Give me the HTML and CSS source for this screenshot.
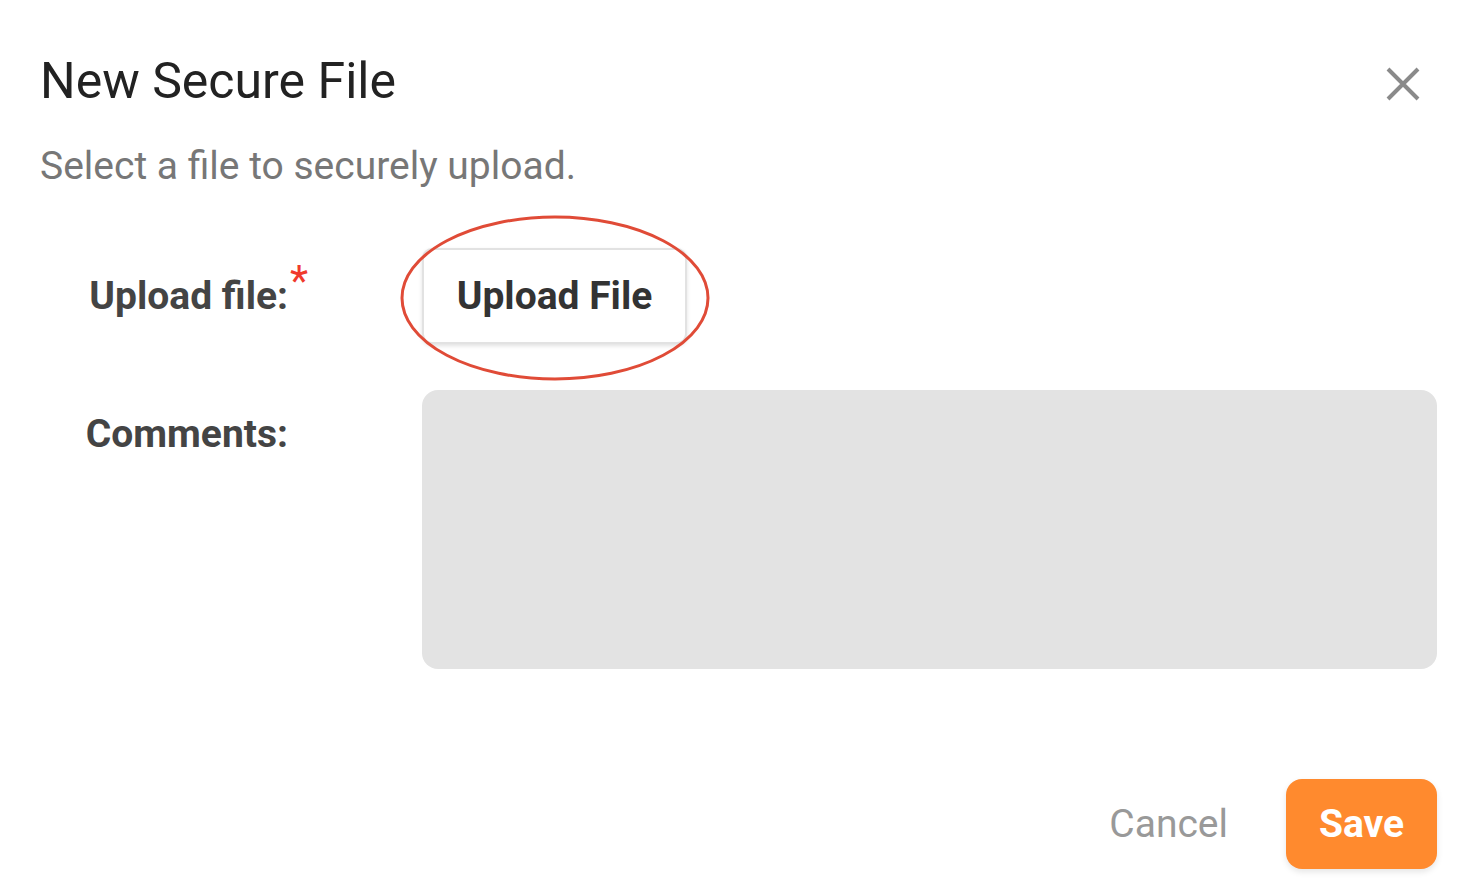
FILE: index.html
```html
<!DOCTYPE html>
<html lang="en">
<head>
    <meta charset="UTF-8">
    <meta name="viewport" content="width=device-width, initial-scale=1.0">
    <title>New Secure File</title>
    <link rel="stylesheet" href="styles.css">
</head>
<body>
    <div class="dialog">
        <div class="dialog-header">
            <h1>New Secure File</h1>
            <button class="close-btn" aria-label="Close">
                <svg width="36" height="36" viewBox="0 0 36 36">
                    <path d="M3 3 L33 33 M33 3 L3 33" stroke="#8a8a8a" stroke-width="4" fill="none"/>
                </svg>
            </button>
        </div>
        <p class="subtitle">Select a file to securely upload.</p>

        <div class="form">
            <div class="label">Upload file:<span class="required">*</span></div>
            <div class="field upload-field">
                <button class="upload-btn">Upload File</button>
                <svg class="highlight" width="312" height="168" viewBox="0 0 312 168">
                    <ellipse cx="156" cy="84" rx="153" ry="81" stroke="#e04b37" stroke-width="3" fill="none"/>
                </svg>
            </div>

            <div class="label label-top">Comments:</div>
            <div class="field">
                <textarea class="comments"></textarea>
            </div>
        </div>

        <div class="dialog-footer">
            <button class="cancel-btn">Cancel</button>
            <button class="save-btn">Save</button>
        </div>
    </div>
</body>
</html>
```

FILE: styles.css
```css
body {
    margin: 0;
    padding: 0;
    font-family: Roboto, "Liberation Sans", sans-serif;
    background-color: white;
}

.dialog {
    padding: 48px 34px 16px 40px;
}

.dialog-header {
    display: flex;
    justify-content: space-between;
    align-items: center;
}

.dialog-header h1 {
    margin: 0;
    font-size: 50px;
    font-weight: 400;
    line-height: 66px;
    color: #222;
}

.close-btn {
    background: none;
    border: none;
    padding: 0;
    margin: 5px 16px 0 0;
    cursor: pointer;
    display: flex;
}

.subtitle {
    margin: 28px 0 0;
    font-size: 39px;
    line-height: 48px;
    color: #777;
}

.form {
    display: grid;
    grid-template-columns: 248px 1fr;
    column-gap: 134px;
    row-gap: 46px;
    margin-top: 58px;
}

.label {
    position: relative;
    text-align: right;
    font-size: 39px;
    font-weight: bold;
    color: #444;
    align-self: center;
}

.label-top {
    align-self: start;
    padding-top: 21px;
}

.required {
    position: absolute;
    left: 100%;
    top: -17px;
    margin-left: 2px;
    color: #f03a2c;
    font-size: 42px;
    font-weight: 400;
}

.field {
    display: flex;
}

.upload-field {
    position: relative;
}

.upload-btn {
    font-family: inherit;
    font-size: 39px;
    font-weight: bold;
    color: #333;
    background: white;
    border: 2px solid #e2e2e2;
    border-radius: 10px;
    height: 96px;
    width: 265px;
    box-shadow: 0 2px 4px rgba(0,0,0,0.12);
    cursor: pointer;
}

.highlight {
    position: absolute;
    left: -23px;
    top: -34px;
    pointer-events: none;
}

.comments {
    flex: 1;
    height: 279px;
    border: none;
    border-radius: 16px;
    background-color: #e3e3e3;
    resize: none;
    font-family: inherit;
    font-size: 30px;
    padding: 16px;
    box-sizing: border-box;
}

.dialog-footer {
    display: flex;
    justify-content: flex-end;
    align-items: center;
    gap: 58px;
    margin-top: 110px;
}

.cancel-btn {
    background: none;
    border: none;
    padding: 0;
    font-family: inherit;
    font-size: 39px;
    color: #999;
    cursor: pointer;
}

.save-btn {
    background-color: #ff8a2e;
    color: white;
    border: none;
    border-radius: 16px;
    width: 151px;
    height: 90px;
    font-family: inherit;
    font-size: 39px;
    font-weight: bold;
    box-shadow: 0 3px 6px rgba(0,0,0,0.1);
    cursor: pointer;
}
```
